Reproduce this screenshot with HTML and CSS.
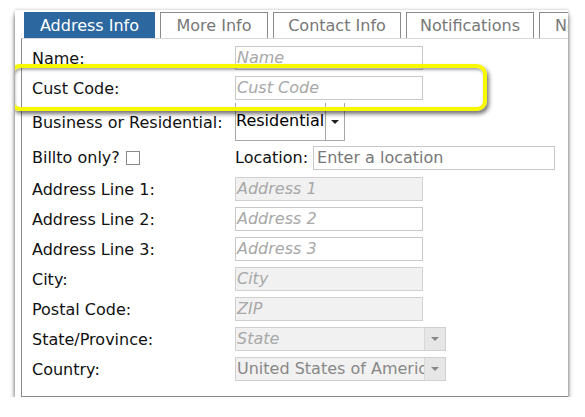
FILE: index.html
```html
<!DOCTYPE html>
<html lang="en">
<head>
    <meta charset="UTF-8">
    <meta name="viewport" content="width=device-width, initial-scale=1.0">
    <title>Address Info</title>
    <link rel="stylesheet" href="styles.css">
</head>
<body>
    <div class="shot">
        <div class="tabs">
            <div class="tab active" style="width:131px">Address Info</div>
            <div class="tab" style="width:108px">More Info</div>
            <div class="tab" style="width:128px">Contact Info</div>
            <div class="tab" style="width:128px">Notifications</div>
            <div class="tab" style="width:60px">Notes</div>
        </div>
        <div class="panel">
            <div class="row">
                <div class="label">Name:</div>
                <div class="field"><div class="input ph">Name</div></div>
            </div>
            <div class="row">
                <div class="label">Cust Code:</div>
                <div class="field"><div class="input ph">Cust Code</div></div>
            </div>
            <div class="row row-tall">
                <div class="label">Business or Residential:</div>
                <div class="field">
                    <div class="select">
                        <span class="select-text">Residential</span>
                        <span class="select-btn"><span class="caret"></span></span>
                    </div>
                </div>
            </div>
            <div class="row row-bill">
                <div class="label">Billto only? <span class="check"></span></div>
                <div class="field">
                    <span class="loc-label">Location:</span>
                    <div class="input loc">Enter a location</div>
                </div>
            </div>
            <div class="row">
                <div class="label">Address Line 1:</div>
                <div class="field"><div class="input ph off">Address 1</div></div>
            </div>
            <div class="row">
                <div class="label">Address Line 2:</div>
                <div class="field"><div class="input ph">Address 2</div></div>
            </div>
            <div class="row">
                <div class="label">Address Line 3:</div>
                <div class="field"><div class="input ph">Address 3</div></div>
            </div>
            <div class="row">
                <div class="label">City:</div>
                <div class="field"><div class="input ph off">City</div></div>
            </div>
            <div class="row">
                <div class="label">Postal Code:</div>
                <div class="field"><div class="input ph off">ZIP</div></div>
            </div>
            <div class="row">
                <div class="label">State/Province:</div>
                <div class="field">
                    <div class="combo">
                        <span class="combo-text ph">State</span>
                        <span class="combo-btn"><span class="caret light"></span></span>
                    </div>
                </div>
            </div>
            <div class="row">
                <div class="label">Country:</div>
                <div class="field">
                    <div class="combo">
                        <span class="combo-text">United States of America</span>
                        <span class="combo-btn"><span class="caret light"></span></span>
                    </div>
                </div>
            </div>
        </div>
        <div class="highlight"></div>
    </div>
</body>
</html>
```

FILE: styles.css
```css
* {
    box-sizing: border-box;
}
html, body {
    margin: 0;
    padding: 0;
    background: #fff;
}
body {
    font-family: 'DejaVu Sans', Verdana, sans-serif;
    font-size: 16px;
    color: #111;
}
.shot {
    position: relative;
    margin: 10px 0 0 15px;
    width: 553px;
    height: 387px;
    background: #fff;
    box-shadow: 0 5px 5px rgba(0, 0, 0, 0.55), 0 0 3px rgba(0, 0, 0, 0.25);
    padding: 2px 0 0 6px;
    overflow: hidden;
}
.tabs {
    display: flex;
    gap: 5px;
    padding-left: 3px;
    height: 26px;
    white-space: nowrap;
}
.tab {
    flex: none;
    height: 26px;
    border: 1px solid #8a8a8a;
    border-bottom: none;
    color: #777;
    font-size: 16px;
    line-height: 25px;
    text-align: center;
    overflow: hidden;
}
.tab:last-child {
    text-align: left;
    padding-left: 15px;
}
.tab.active {
    background: #2c67a0;
    border-color: #2c67a0;
    color: #fff;
}
.panel {
    border-left: 1px solid #8a8a8a;
    border-bottom: 1px solid #8a8a8a;
    border-top: 1px solid #d8d8d8;
    height: 359px;
    padding: 4px 0 0 10px;
}
.row {
    display: flex;
    align-items: center;
    height: 30px;
}
.row-tall {
    height: 38px;
}
.row-bill {
    height: 33px;
}
.label {
    width: 203px;
    flex: none;
    display: flex;
    align-items: center;
    gap: 6px;
    font-size: 16px;
}
.field {
    display: flex;
    align-items: center;
}
.input {
    width: 188px;
    height: 24px;
    border: 1px solid #c8c8c8;
    background: #fff;
    padding: 0 1px;
    line-height: 22px;
    font-size: 16px;
    white-space: nowrap;
    overflow: hidden;
}
.ph {
    color: #a8a8a8;
    font-style: italic;
}
.off {
    background: #f1f1f1;
    border-color: #d0d0d0;
}
.check {
    display: inline-block;
    width: 14px;
    height: 14px;
    border: 1px solid #8a8a8a;
    background: #fff;
}
.loc-label {
    font-size: 16px;
    margin-right: 5px;
}
.input.loc {
    width: 242px;
    color: #777;
    padding-left: 3px;
}
.select {
    display: flex;
    height: 38px;
    width: 110px;
    border: 1px solid #a8a8a8;
    border-top: none;
}
.select-text {
    width: 89px;
    font-size: 16px;
    line-height: 36px;
    overflow: hidden;
    white-space: nowrap;
    color: #000;
}
.select-btn {
    flex: 1;
    border-left: 1px solid #a8a8a8;
    display: flex;
    align-items: center;
    justify-content: center;
}
.caret {
    width: 0;
    height: 0;
    border-left: 4px solid transparent;
    border-right: 4px solid transparent;
    border-top: 4px solid #222;
}
.caret.light {
    border-top-color: #888;
}
.combo {
    display: flex;
    width: 211px;
    height: 24px;
    border: 1px solid #d0d0d0;
    background: #f1f1f1;
}
.combo-text {
    width: 188px;
    font-size: 16px;
    line-height: 22px;
    color: #888;
    white-space: nowrap;
    overflow: hidden;
    padding-left: 1px;
}
.combo-text.ph {
    color: #a8a8a8;
}
.combo-btn {
    flex: 1;
    background: #e6e6e6;
    border-left: 1px solid #d8d8d8;
    display: flex;
    align-items: center;
    justify-content: center;
}
.highlight {
    position: absolute;
    left: -5px;
    top: 54px;
    width: 477px;
    height: 47px;
    border: 4px solid #f8f800;
    border-radius: 10px;
    box-shadow: 2px 3px 4px rgba(0, 0, 0, 0.55), inset 1px 2px 3px rgba(0, 0, 0, 0.35);
}
```
